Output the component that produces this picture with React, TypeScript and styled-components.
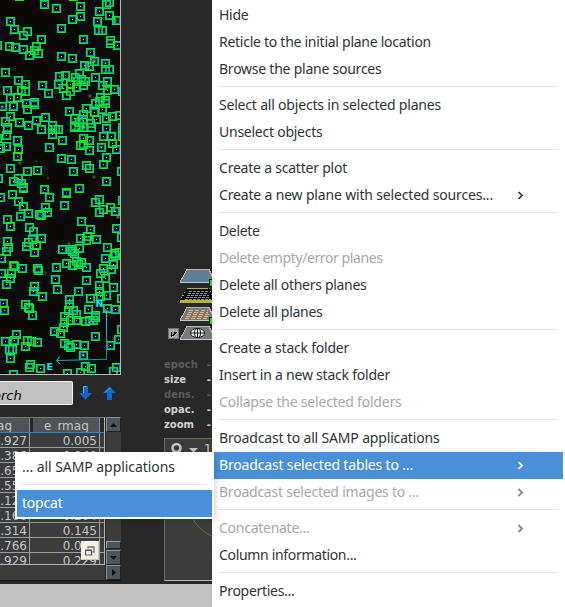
import React, { useLayoutEffect, useRef } from "react";
import styled, { createGlobalStyle, css } from "styled-components";

const GlobalStyle = createGlobalStyle`
  * { box-sizing: border-box; }
  html, body { margin: 0; padding: 0; overflow: hidden; background: #282828; }
`;

const Desktop = styled.div`
  position: relative;
  width: 565px;
  height: 607px;
  overflow: hidden;
  display: grid;
  grid-template-rows: 584px 1fr;
  background: #282828;
  color: #c4c6c9;
  font-family: "DejaVu Sans", sans-serif;
`;
const Workspace = styled.main`
  display: grid;
  grid-template-columns: 121px 91px;
`;
const StatusBar = styled.footer`
  background: #c0c0c0;
`;

/* ---------- sky view ---------- */
const SkyColumn = styled.section`
  display: flex;
  flex-direction: column;
`;
const SkyView = styled.svg`
  display: block;
  width: 121px;
  height: 375px;
  background: #0b0a09;
  border-right: 1px solid #b9b9b9;
  border-bottom: 1px solid #b9b9b9;
`;

const SOURCES =
  "44,4 56,8 80,6 80,16 72,19 10,21 14,29 23,35 27,31 61,28 41,39 83,39 99,11 106,4 109,2 109,15 97,21 116,20 118,20 98,30 102,30 110,40 110,43 117,45 9,46 15,47 23,49 29,55 36,46 34,50 38,53 61,56 72,58 90,52 94,61 84,65 89,66 105,63 105,69 109,69 5,72 -3,45 59,76 65,75 79,73 75,77 95,77 107,81 102,85 107,90 114,89 122,91 85,81 81,79 18,80 25,84 42,85 48,93 58,84 63,88 70,84 70,91 66,95 76,87 83,85 77,81 7,90 10,98 17,97 21,90 25,91 26,103 34,104 34,102 13,106 27,109 2,106 10,116 5,121 7,127 19,122 28,125 36,120 45,117 52,125 41,129 58,129 69,111 86,108 94,112 100,97 95,103 99,101 105,100 102,109 105,103 74,118 83,114 83,119 79,122 90,123 96,119 106,118 112,116 119,115 74,126 106,128 122,127 19,-4 73,-4 " +
  "7,129 52,129 52,134 55,129 62,140 6,135 17,140 6,146 18,149 17,156 49,147 -3,138 0,148 61,158 71,159 10,168 27,171 37,170 73,171 -2,178 74,127 78,127 83,127 91,127 83,138 89,140 80,145 83,144 89,150 103,136 111,136 112,143 101,147 116,149 122,136 106,157 103,164 86,165 89,168 121,171 106,181 18,178 13,181 21,183 23,187 23,188 12,194 0,197 18,201 23,206 44,189 49,197 66,192 66,193 79,188 64,205 99,199 95,202 122,200 99,212 103,209 110,207 115,211 45,207 47,212 39,214 41,215 28,213 20,216 7,219 10,226 29,227 33,231 41,238 7,241 8,247 6,251 32,239 28,242 26,246 36,245 34,252 81,221 90,229 80,238 87,236 86,240 96,239 116,228 121,237 62,249 70,249 72,251 79,248 107,247 119,252 114,253 " +
  "1,258 22,268 13,265 14,266 11,273 10,278 6,284 1,273 37,268 38,270 56,267 66,263 55,279 57,289 76,261 81,262 72,265 78,264 86,267 74,253 86,280 105,258 113,264 115,255 103,268 100,273 111,269 105,278 99,285 99,291 113,287 106,295 34,286 33,291 42,296 78,291 90,298 69,299 69,304 3,303 4,310 25,304 28,307 29,308 32,315 68,310 73,310 76,314 70,320 76,320 64,316 64,322 63,327 54,331 60,333 88,309 95,315 95,317 85,321 89,320 93,320 100,296 107,308 115,309 121,298 95,336 121,329 118,339 110,345 16,334 5,341 14,340 9,349 12,349 10,358 25,346 27,340 31,341 37,342 64,343 68,345 70,347 76,344 84,345 83,355 30,364 29,367 40,368 85,366 91,368 80,372 67,373 113,371 116,367 13,374";

const points = SOURCES.split(" ").map((p) => p.split(",").map(Number));
const CROWDED = 5;
const isolated = points.filter(
  ([x, y], i) => !points.some(([a, b], j) => i !== j && Math.abs(a - x) < CROWDED && Math.abs(b - y) < CROWDED)
);
const frames = (r: number) =>
  points.map(([x, y]) => `M${x - r + 0.5} ${y - r + 0.5}h${2 * r}v${2 * r}h${-2 * r}z`).join("");
const centres = (list: number[][]) => list.map(([x, y]) => `M${x} ${y}h1v1h-1z`).join("");

const GLOWS: [number, number, number, number][] = [
  [83, 127, 2.6, 0.95], [94, 61, 2.4, 0.6], [90, 96, 2, 0.4], [2, 107, 2, 0.5], [83, 355, 2, 0.65],
  [11, 34, 2, 0.3], [20, 163, 2, 0.4], [101, 147, 2, 0.5], [37, 170, 1.5, 0.3], [94, 177, 2, 0.35],
  [45, 273, 2, 0.25], [69, 244, 2, 0.35], [118, 217, 2, 0.5], [105, 63, 2, 0.3], [48, 178, 1.5, 0.2], [36, 161, 1.5, 0.2],
];

const Sky = () => (
  <SkyView viewBox="0 0 120 374" shapeRendering="crispEdges">
    <defs>
      <radialGradient id="glow">
        <stop offset="0" stopColor="#fff" />
        <stop offset="1" stopColor="#aaa" stopOpacity="0" />
      </radialGradient>
      <linearGradient id="north" x1="0" y1="0" x2="0" y2="1">
        <stop offset="0" stopColor="#00e8f0" />
        <stop offset="1" stopColor="#008a90" />
      </linearGradient>
    </defs>
    {GLOWS.map(([x, y, r, o], i) => (
      <circle key={i} cx={x} cy={y} r={r * 1.4} fill="url(#glow)" opacity={o} />
    ))}
    <path d={frames(3)} fill="none" stroke="#0e86d4" />
    <path d={frames(4)} fill="none" stroke="#00f400" />
    <path d={centres(points)} fill="#6b4a28" />
    <path d={centres(isolated)} fill="#ffb060" />
    <g shapeRendering="auto">
      <rect x="106" y="311" width="1" height="49" fill="url(#north)" />
      <path d="M102.500 313.500l3.500-4 3.500 4" fill="none" stroke="#00e0ec" />
      <path d="M106.500 359.300L57 360.500" fill="none" stroke="#00a6ae" />
      <path d="M60 356.500l-3.500 4 3.500 3.500" fill="none" stroke="#00e0ec" />
    </g>
    <text x="95.500" y="307" fontSize="9.500" fontWeight="700" fontFamily="DejaVu Sans" fill="#00f0ff">N</text>
    <text x="46.500" y="370" fontSize="9.500" fontWeight="700" fontFamily="DejaVu Sans" fill="#00f0ff">E</text>
  </SkyView>
);

/* ---------- search strip ---------- */
const SearchStrip = styled.div`
  display: flex;
  align-items: flex-start;
  height: 42px;
  padding-top: 6px;
`;
const SearchField = styled.div`
  width: 73px;
  height: 24px;
  flex: none;
  background: #c0c0c0;
  border: 1px solid #f2f2f2;
  border-left: 0;
  border-radius: 0 2px 2px 0;
  color: #000;
  font-style: italic;
  font-size: 13px;
  line-height: 27px;
  text-indent: -7px;
  overflow: hidden;
`;
const ArrowIcon = styled.svg<{ $up?: boolean }>`
  width: 13px;
  height: 14px;
  margin: 5px 0 0 ${(p) => (p.$up ? 11 : 6)}px;
  flex: none;
`;
const Arrow = ({ up }: { up?: boolean }) => (
  <ArrowIcon $up={up} viewBox="0 0 13 14">
    <path d={up ? "M4 14h5V7h4L6.500 .5 0 7h4z" : "M4 0h5v7h4L6.500 13.500 0 7h4z"} fill="#1068d0" />
    <path d={up ? "M2 6.500L6.500 2 8 3.500" : "M4.500 7V.500h3"} fill="none" stroke="#5aa8f4" />
  </ArrowIcon>
);

/* ---------- measurement table ---------- */
const TableArea = styled.div`
  display: grid;
  grid-template-columns: 105px 16px;
  grid-template-rows: 148px 16px;
  background: #3c3c3c;
  height: 164px;
  border-bottom: 1px solid #141414;
`;
const Table = styled.div`
  display: flex;
  flex-direction: column;
  overflow: hidden;
  border-right: 1px solid #b4b6b8;
  border-bottom: 1px solid #b4b6b8;
`;
const HeaderRow = styled.div`
  display: grid;
  grid-template-columns: 30px 70px 4px;
  flex: none;
  height: 16px;
  border-top: 1px solid #77797a;
  border-bottom: 1px solid #0c90dc;
  background: #282828;
`;
const HeaderCell = styled.div<{ $first?: boolean }>`
  margin-left: ${(p) => (p.$first ? 0 : 3)}px;
  background: #505357;
  border-right: 1px solid #8a8c8e;
  font-size: 12px;
  line-height: 17px;
  overflow: hidden;
  white-space: nowrap;
  ${(p) => (p.$first
    ? css`display: flex; justify-content: flex-end; padding-right: 17px;`
    : css`padding-left: 11px;`)}
`;
const Row = styled.div`
  display: grid;
  grid-template-columns: 30px 70px 4px;
  flex: none;
  height: 15px;
  border-bottom: 1px solid #9c9ea0;
`;
const Cell = styled.div`
  display: flex;
  justify-content: flex-end;
  padding-right: 2px;
  border-right: 1px solid #9c9ea0;
  font-size: 12px;
  line-height: 16px;
  overflow: hidden;
  white-space: nowrap;
`;
const VScroll = styled.div`
  display: flex;
  flex-direction: column;
  border-left: 1px solid #222;
`;
const ScrollButton = styled.div`
  display: flex;
  align-items: center;
  justify-content: center;
  width: 15px;
  height: 15px;
  flex: none;
  background: #505559;
  border: 1px solid #8f9397;
  border-right-color: #222;
  border-bottom-color: #222;
`;
const ScrollTrack = styled.div`
  flex: 1;
  display: flex;
  align-items: flex-end;
  background: #3c3c3c;
`;
const ScrollThumb = styled.div`
  width: 15px;
  height: 8px;
  background: #505559;
  border: 1px solid #a0a4a8;
  border-right-color: #222;
  border-bottom-color: #222;
  margin-bottom: 1px;
`;
const Glyph = styled.svg`
  display: block;
`;
const DetachButton = styled.div`
  position: absolute;
  left: 81px;
  top: 541px;
  width: 18px;
  height: 19px;
  display: flex;
  align-items: center;
  justify-content: center;
  background: #f1f1e8;
  border: 1px solid #fff;
  border-right-color: #c8c8be;
  border-bottom-color: #c8c8be;
`;

const ROWS = [
  ["14.927", "0.005"], ["14.386", "0.040"], ["16.651", "0.112"], ["15.553", "0.084"], ["15.124", "0.068"],
  ["16.166", "0.204"], ["16.314", "0.145"], ["15.766", "0.086"], ["16.929", "0.229"],
];

/* ---------- plane stack ---------- */
const StackColumn = styled.aside`
  display: flex;
  flex-direction: column;
  overflow: hidden;
  padding-left: 43px;
`;
const StackIcons = styled.svg`
  display: block;
  flex: none;
  width: 48px;
  height: 346px;
`;
const Properties = styled.dl`
  margin: 11px 0 0;
  flex: none;
`;
const Property = styled.div<{ $dim?: boolean }>`
  display: flex;
  justify-content: space-between;
  height: 15px;
  padding-right: 1px;
  font-size: 10px;
  font-weight: 700;
  line-height: 15px;
  color: ${(p) => (p.$dim ? "#5a5b5d" : "#d2d3d5")};
`;
const ZoomPanel = styled.div`
  margin-top: 6px;
  height: 143px;
  flex: none;
  background: #3c3c3c;
  border: solid #6c6c60;
  border-width: 1px 0 1px 1px;
  border-bottom-color: #b9b9b9;
`;

const Plane = ({ y, kind }: { y: number; kind: "blue" | "locked" | "orange" | "image" }) => {
  const ink = { blue: "#2494d4", locked: "#85889a", orange: "#f0b468", image: "#fff" }[kind];
  const locked = kind === "locked";
  return (
    <g transform={`translate(16 ${y})`}>
      <path d="M7 0h22l7 13H0z" fill={locked ? "#0a0a08" : "#77797c"} stroke={locked ? "#0a0a08" : "none"} />
      <path d="M0 13L7 .500h22l6 12" fill="none" stroke={locked ? "#a8a42c" : "#b4b7ba"} strokeDasharray={locked ? "1 2" : undefined} />
      {locked && <path d="M7 .500h21" stroke="#b8b430" />}
      <path d={locked ? "M0 13h36" : "M0 13.500h36"} stroke={locked ? "#b8b430" : "#c8cbcd"} strokeWidth={locked ? 3 : 1.6} />
      {kind === "image" ? (
        <g shapeRendering="auto">
          <ellipse cx="17.500" cy="7" rx="7" ry="4.500" fill="#fff" stroke="#111" />
          <ellipse cx="17.500" cy="7" rx="3" ry="4.500" fill="none" stroke="#111" />
          <path d="M10.500 7h14M17.500 2.500v9" stroke="#111" />
        </g>
      ) : (
        <path
          d="M9 3.500h19M8 5.500h20M7 7.500h22M6 9.500h24M5 11.500h26"
          stroke={ink}
          strokeDasharray={kind === "locked" ? "3 1" : "4 2"}
        />
      )}
    </g>
  );
};

/* ---------- menus ---------- */
const menuFont = css`
  font-family: "Noto Sans", "Open Sans", sans-serif;
  font-size: 14px;
`;
const Menu = styled.div`
  position: absolute;
  left: 212px;
  top: 0;
  width: 353px;
  height: 607px;
  padding: 2px 2px 0;
  background: #fff;
  ${menuFont}
`;
const SubMenu = styled.div`
  position: absolute;
  left: 15px;
  top: 452px;
  width: 199px;
  height: 67px;
  padding: 2px;
  background: #fff;
  box-shadow: 2px 1px 6px rgba(0, 0, 0, 0.16);
  ${menuFont}
`;
const MenuItem = styled.div<{ $state?: "active" | "disabled" }>`
  display: flex;
  align-items: center;
  justify-content: space-between;
  height: 27px;
  padding: 0 39px 0 5px;
  color: ${(p) => (p.$state === "active" ? "#fff" : p.$state === "disabled" ? "#a5a8a8" : "#2e3436")};
  background: ${(p) => (p.$state === "active" ? "#4a90d9" : "transparent")};
`;
const Separator = styled.hr`
  height: 1px;
  margin: 3px 5px 5px 5px;
  border: 0;
  background: #e6e6e6;
`;
const Label = styled.span`
  white-space: pre;
  line-height: 25px;
  padding-bottom: 2px;
`;

/* Spreads the letters so that a label takes the given width. */
const FittedLabel = ({ text, width }: { text: string; width: number }) => {
  const ref = useRef<HTMLSpanElement>(null);
  useLayoutEffect(() => {
    const el = ref.current!;
    el.style.letterSpacing = "0px";
    const natural = el.getBoundingClientRect().width;
    el.style.letterSpacing = `${(width - natural) / text.length}px`;
  }, [text, width]);
  return <Label ref={ref}>{text}</Label>;
};

const Chevron = ({ bold }: { bold?: boolean }) => (
  <Glyph width="8" height="10" viewBox="0 0 8 10">
    <path d="M2.500 1L6 4.500 2.500 8" fill="none" stroke={bold ? "#8b8e8f" : "currentColor"} strokeWidth={bold ? 2 : 1.7} />
  </Glyph>
);

type Entry = { text: string; width: number; state?: "active" | "disabled"; sub?: boolean } | null;
const ENTRIES: Entry[] = [
  { text: "Hide", width: 29.5 },
  { text: "Reticle to the initial plane location", width: 212 },
  { text: "Browse the plane sources", width: 162.5 },
  null,
  { text: "Select all objects in selected planes", width: 222 },
  { text: "Unselect objects", width: 103.5 },
  null,
  { text: "Create a scatter plot", width: 128 },
  { text: "Create a new plane with selected sources...", width: 274, sub: true },
  null,
  { text: "Delete", width: 40.5 },
  { text: "Delete empty/error planes", width: 163.5, state: "disabled" },
  { text: "Delete all others planes", width: 147.5 },
  { text: "Delete all planes", width: 103.5 },
  null,
  { text: "Create a stack folder", width: 130 },
  { text: "Insert in a new stack folder", width: 171 },
  { text: "Collapse the selected folders", width: 182.5, state: "disabled" },
  null,
  { text: "Broadcast to all SAMP applications", width: 220.5 },
  { text: "Broadcast selected tables to ...", width: 194, state: "active", sub: true },
  { text: "Broadcast selected images to ...", width: 200, state: "disabled", sub: true },
  null,
  { text: "Concatenate...", width: 90.5, state: "disabled", sub: true },
  { text: "Column information...", width: 137.5 },
  null,
  { text: "Properties...", width: 75.5 },
];

export default function App() {
  return (
    <>
      <GlobalStyle />
      <Desktop>
        <Workspace>
          <SkyColumn>
            <Sky />
            <SearchStrip>
              <SearchField>orch</SearchField>
              <Arrow />
              <Arrow up />
            </SearchStrip>
            <TableArea>
              <Table>
                <HeaderRow>
                  <HeaderCell $first>rmag</HeaderCell>
                  <HeaderCell>e_rmag</HeaderCell>
                </HeaderRow>
                {ROWS.map(([mag, err]) => (
                  <Row key={mag}>
                    <Cell>{mag}</Cell>
                    <Cell>{err}</Cell>
                  </Row>
                ))}
              </Table>
              <VScroll>
                <ScrollButton>
                  <Glyph width="7" height="4"><path d="M0 4L3.500 0 7 4z" fill="#111" /></Glyph>
                </ScrollButton>
                <ScrollTrack><ScrollThumb /></ScrollTrack>
                <ScrollButton>
                  <Glyph width="7" height="4"><path d="M0 0h7L3.500 4z" fill="#111" /></Glyph>
                </ScrollButton>
              </VScroll>
              <span />
              <VScroll>
                <ScrollButton>
                  <Glyph width="4" height="7"><path d="M0 0v7l4-3.500z" fill="#111" /></Glyph>
                </ScrollButton>
              </VScroll>
            </TableArea>
          </SkyColumn>
          <StackColumn>
            <StackIcons viewBox="0 0 48 346" shapeRendering="crispEdges">
              <Plane y={269} kind="blue" />
              <Plane y={288} kind="locked" />
              <Plane y={307} kind="orange" />
              <Plane y={326} kind="image" />
              <rect x="45.500" y="279.500" width="6" height="7" fill="#00f000" stroke="#000" />
              <rect x="45.500" y="317.500" width="6" height="7" fill="#00f000" stroke="#000" />
              <rect x="4.500" y="328.500" width="10" height="10" fill="#a2a5a8" stroke="#73777b" />
              <path d="M7.500 332v4.500M9 336l3-4" stroke="#000" strokeWidth="1.800" fill="none" />
            </StackIcons>
            <Properties>
              <Property $dim><span>epoch</span><span>-</span></Property>
              <Property><span>size</span><span>-</span></Property>
              <Property $dim><span>dens.</span><span>-</span></Property>
              <Property><span>opac.</span><span>-</span></Property>
              <Property><span>zoom</span><span>-</span></Property>
            </Properties>
            <ZoomPanel>
              <Glyph width="47" height="141" viewBox="0 0 47 141">
                <circle cx="11.500" cy="9" r="4" fill="none" stroke="#c4c6c9" strokeWidth="2.600" />
                <path d="M11.500 13v5" stroke="#c4c6c9" strokeWidth="3" />
                <path d="M24 9h9l-4.500 4.500z" fill="#c4c6c9" />
                <text x="39" y="14" fontSize="12" fill="#c4c6c9">1x</text>
                <path d="M28 78c0 6 10 15 20 20" stroke="#3a9a10" fill="none" />
              </Glyph>
            </ZoomPanel>
          </StackColumn>
        </Workspace>
        <StatusBar />
        <DetachButton>
          <Glyph width="10" height="10" viewBox="0 0 10 10">
            <path d="M3 2.500V1h6v5H7.500" fill="none" stroke="#77776c" strokeWidth="1.400" />
            <path d="M.500 4h6v5h-6zM.500 4.500h6" fill="none" stroke="#55554c" strokeWidth="1.200" />
          </Glyph>
        </DetachButton>
        <Menu>
          {ENTRIES.map((e, i) =>
            e === null ? (
              <Separator key={i} />
            ) : (
              <MenuItem key={i} $state={e.state}>
                <FittedLabel text={e.text} width={e.width} />
                {e.sub && <Chevron bold={e.state === "disabled"} />}
              </MenuItem>
            )
          )}
        </Menu>
        <SubMenu>
          <MenuItem><FittedLabel text="... all SAMP applications" width={153} /></MenuItem>
          <Separator />
          <MenuItem $state="active"><FittedLabel text="topcat" width={40.5} /></MenuItem>
        </SubMenu>
      </Desktop>
    </>
  );
}
